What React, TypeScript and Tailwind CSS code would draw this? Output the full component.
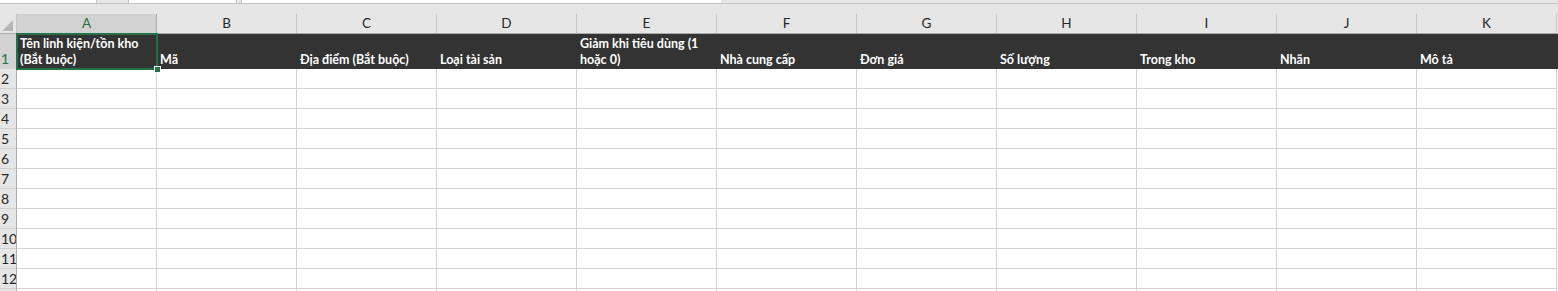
import React from 'react';

const columns = ['A', 'B', 'C', 'D', 'E', 'F', 'G', 'H', 'I', 'J', 'K'];

const headers = [
  'Tên linh kiện/tồn kho (Bắt buộc)',
  'Mã',
  'Địa điểm (Bắt buộc)',
  'Loại tài sản',
  'Giảm khi tiêu dùng (1 hoặc 0)',
  'Nhà cung cấp',
  'Đơn giá',
  'Số lượng',
  'Trong kho',
  'Nhãn',
  'Mô tả',
];

const bodyRows = [2, 3, 4, 5, 6, 7, 8, 9, 10, 11, 12];

const font = { fontFamily: 'Lato, "Liberation Sans", sans-serif' };

export default function App() {
  return (
    <div className="w-[1558px] h-[291px] overflow-hidden bg-white" style={font}>
      {/* ribbon remnants along the top edge */}
      <div className="flex h-[4px] bg-[#e6e6e6] border-b border-[#c6c6c6]">
        <div className="w-[97px] bg-white border-r border-[#c6c6c6]" />
        <div className="w-[31px]" />
        <div className="w-[109px] bg-white border-x border-[#c6c6c6]" />
        <div className="w-[4px]" />
        <div className="w-[480px] bg-white border-l border-[#c6c6c6]" />
      </div>
      <div className="h-[10px] bg-[#e6e6e6]" />

      {/* column letters */}
      <div className="flex h-[20px] bg-[#e6e6e6] border-b border-[#ababab]">
        <div className="w-[17px] shrink-0 relative border-r border-[#c6c6c6]">
          <div className="absolute left-[2px] bottom-[2px] w-0 h-0 border-l-[11px] border-l-transparent border-b-[11px] border-b-[#b7b7b7]" />
        </div>
        {columns.map((c, i) => (
          <div
            key={c}
            className={`w-[140px] shrink-0 flex items-center justify-center text-[13.5px] border-r ${
              i === 0
                ? 'bg-[#d2d2d2] text-[#217346] border-[#ababab]'
                : 'text-[#262626] border-[#c6c6c6]'
            }`}
          >
            {c}
          </div>
        ))}
        <div className="flex-1" />
      </div>

      {/* header row */}
      <div className="relative flex h-[35px]">
        <div className="w-[17px] shrink-0 bg-[#d2d2d2] border-r border-[#ababab] flex items-end pb-[3px] pl-[1px] text-[14px] text-[#217346] leading-none">
          1
        </div>
        {headers.map((h) => (
          <div
            key={h}
            className="w-[140px] shrink-0 bg-[#333333] flex items-end px-[3px] pb-[1px] text-[12.5px] font-bold text-white leading-[16px]"
          >
            <span className="block w-[124px]">{h}</span>
          </div>
        ))}
        <div className="flex-1 bg-[#333333]" />

        {/* active cell A1 */}
        <div className="absolute left-[16px] top-[-1px] w-[142px] h-[37px] border-2 border-[#217346] pointer-events-none">
          <div className="absolute right-[-5px] bottom-[-5px] w-[7px] h-[7px] bg-[#217346] border border-white" />
        </div>
      </div>

      {/* empty body rows */}
      {bodyRows.map((r) => (
        <div key={r} className="flex h-[20px]">
          <div className="w-[17px] shrink-0 bg-[#e6e6e6] border-r border-b border-[#ababab] border-b-[#d0d0d0] flex items-center pl-[1px] text-[14px] text-[#262626] leading-none overflow-hidden whitespace-nowrap">
            {r}
          </div>
          {columns.map((c) => (
            <div key={c} className="w-[140px] shrink-0 border-r border-b border-[#d4d4d4]" />
          ))}
          <div className="flex-1 bg-[#f0f0f0]" />
        </div>
      ))}
      <div className="flex h-[20px]">
        <div className="w-[17px] shrink-0 bg-[#e6e6e6] border-r border-[#ababab]" />
        {columns.map((c) => (
          <div key={c} className="w-[140px] shrink-0 border-r border-[#d4d4d4]" />
        ))}
      </div>
    </div>
  );
}
